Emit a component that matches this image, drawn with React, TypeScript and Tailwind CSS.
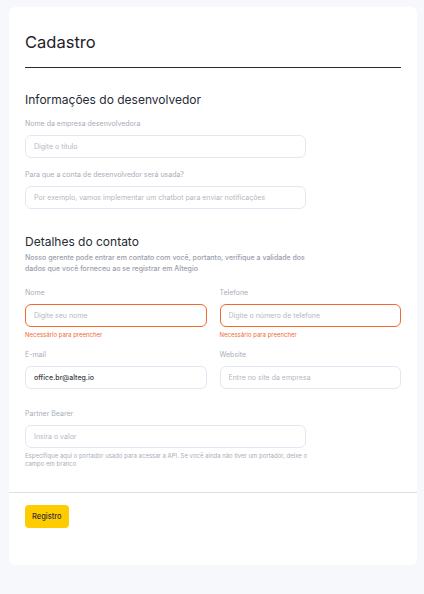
const inputBase =
  "h-[23px] w-full rounded-[6px] border bg-white px-[8px] text-[7px] outline-none placeholder:text-[#b4b7c4]";

function Label({ children }: { children: React.ReactNode }) {
  return <div className="text-[7px] leading-[10px] text-[#a9adb8]">{children}</div>;
}

export default function App() {
  return (
    <div
      className="min-h-[594px] bg-[#f7f8fc] pt-[7px] pl-[9px] pr-[7px] pb-[29px]"
      style={{ fontFamily: "Inter, 'Noto Sans', sans-serif" }}
    >
      <div className="rounded-[6px] bg-white">
        <div className="px-[16px] pt-[23px]">
          <h1 className="text-[16.5px] leading-[24px] text-[#1f2129]">Cadastro</h1>
          <div className="mt-[13px] h-px bg-[#2a2b31]" />

          <h2 className="mt-[22px] text-[12px] leading-[20px] text-[#262a35]">
            Informações do desenvolvedor
          </h2>

          <div className="mt-[9px] w-[281px]">
            <Label>Nome da empresa desenvolvedora</Label>
            <input className={`${inputBase} mt-[6px] border-[#e4e6f4]`} placeholder="Digite o título" />
          </div>

          <div className="mt-[12px] w-[281px]">
            <Label>Para que a conta de desenvolvedor será usada?</Label>
            <input
              className={`${inputBase} mt-[6px] border-[#e4e6f4]`}
              placeholder="Por exemplo, vamos implementar um chatbot para enviar notificações"
            />
          </div>

          <h2 className="mt-[23px] text-[12px] leading-[20px] text-[#262a35]">Detalhes do contato</h2>
          <p className="w-[285px] text-[7px] font-medium leading-[11px] text-[#9a9eab]">
            Nosso gerente pode entrar em contato com você, portanto, verifique a validade dos dados que você
            forneceu ao se registrar em Altegio
          </p>

          <div className="mt-[14px] grid grid-cols-2 gap-x-[13px]">
            <div>
              <Label>Nome</Label>
              <input className={`${inputBase} mt-[6px] border-[#f0692f]`} placeholder="Digite seu nome" />
              <div className="mt-[4px] text-[6px] leading-[8px] text-[#f0692f]">Necessário para preencher</div>
            </div>
            <div>
              <Label>Telefone</Label>
              <input
                className={`${inputBase} mt-[6px] border-[#f0692f]`}
                placeholder="Digite o número de telefone"
              />
              <div className="mt-[4px] text-[6px] leading-[8px] text-[#f0692f]">Necessário para preencher</div>
            </div>
          </div>

          <div className="mt-[11px] grid grid-cols-2 gap-x-[13px]">
            <div>
              <Label>E-mail</Label>
              <input
                className={`${inputBase} mt-[6px] border-[#e4e6f4] font-medium text-[#3a3d48]`}
                defaultValue="office.br@alteg.io"
              />
            </div>
            <div>
              <Label>Website</Label>
              <input className={`${inputBase} mt-[6px] border-[#e4e6f4]`} placeholder="Entre no site da empresa" />
            </div>
          </div>

          <div className="mt-[20px] w-[281px]">
            <Label>Partner Bearer</Label>
            <input className={`${inputBase} mt-[6px] border-[#e4e6f4]`} placeholder="Insira o valor" />
            <p className="mt-[4px] w-[290px] text-[6px] leading-[8px] text-[#a9adb8]">
              Especifique aqui o portador usado para acessar a API. Se você ainda não tiver um portador, deixe o
              campo em branco
            </p>
          </div>
        </div>

        <div className="mt-[24px] h-px bg-[#dcdde6]" />

        <div className="flex px-[16px] pt-[12px] pb-[37px]">
          <button className="h-[23px] rounded-[4px] bg-[#ffcc00] px-[7px] text-[7.5px] font-medium text-[#2d2f36]">
            Registro
          </button>
        </div>
      </div>
    </div>
  );
}
